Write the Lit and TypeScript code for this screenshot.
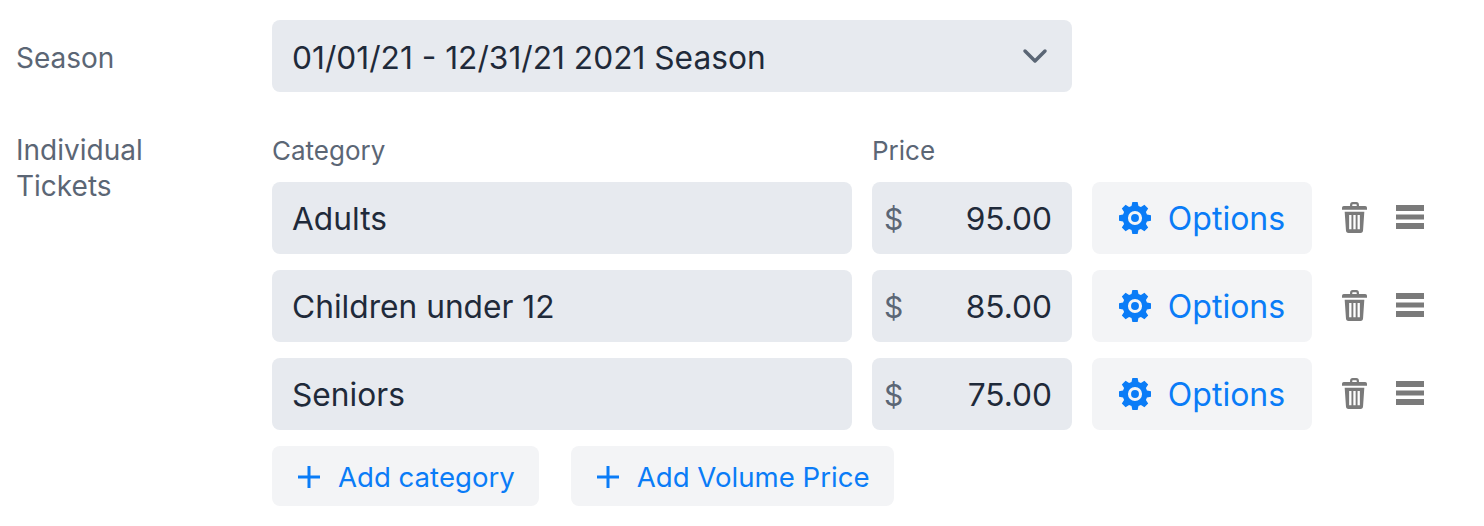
import { LitElement, html, css, svg } from "lit";
import { customElement } from "lit/decorators.js";

const gear = svg`<path fill-rule="evenodd" fill="#0a7cf7" d="M13.2-1h5.600l.9 4.300 2.600 1.100L26 2l4 4-2.400 3.700 1.100 2.600 4.300.9v5.600l-4.300.9-1.100 2.600L30 26l-4 4-3.700-2.400-2.600 1.100-.9 4.300h-5.600l-.9-4.300-2.600-1.100L6 30l-4-4 2.400-3.700-1.100-2.600-4.300-.9v-5.600l4.300-.9 1.100-2.600L2 6l4-4 3.700 2.400 2.600-1.100zM16 8.500a7.500 7.500 0 1 0 0 15 7.500 7.500 0 0 0 0-15z"/><circle cx="16" cy="16" r="4.200" fill="#0a7cf7"/>`;

const rows = [
  { name: "Adults", price: "95.00" },
  { name: "Children under 12", price: "85.00" },
  { name: "Seniors", price: "75.00" },
];

@customElement("app-root")
export class AppRoot extends LitElement {
  static styles = css`
    :host {
      display: block;
      width: 1484px;
      height: 526px;
      background: #fff;
      font-family: Inter, "Liberation Sans", sans-serif;
      color: #1f2a3a;
      overflow: hidden;
    }
    .page {
      display: grid;
      grid-template-columns: 256px 1fr;
      row-gap: 40px;
      padding: 20px 0 0 16px;
    }
    .label {
      font-size: 28px;
      line-height: 36px;
      color: #5b6675;
    }
    .season-label {
      align-self: center;
      padding-top: 4px;
    }
    .ticket-label {
      width: 180px;
    }
    .select {
      width: 800px;
      height: 72px;
      box-sizing: border-box;
      padding: 0 20px;
      display: flex;
      align-items: center;
      justify-content: space-between;
      background: #e7eaef;
      border-radius: 8px;
      font-size: 31.7px;
    }
    .select-text {
      padding-top: 2px;
    }
    .chev {
      width: 26px;
      height: 16px;
      margin: 0 4px 1px 0;
      display: block;
    }
    .grid {
      display: grid;
      grid-template-columns: 580px 200px 220px 1fr;
      column-gap: 20px;
      row-gap: 16px;
      align-items: center;
    }
    .head {
      height: 34px;
      box-sizing: border-box;
      padding-top: 4px;
      font-size: 26px;
      line-height: 30px;
      color: #5b6675;
    }
    .field {
      height: 72px;
      box-sizing: border-box;
      background: #e7eaef;
      border-radius: 8px;
      display: flex;
      align-items: center;
      padding: 1px 20px 0;
      font-size: 31.7px;
    }
    .price {
      justify-content: space-between;
      padding: 1px 20px 0 12px;
    }
    .dollar {
      color: #5b6675;
      font-size: 30px;
    }
    .options {
      height: 72px;
      box-sizing: border-box;
      background: #f3f4f6;
      border: none;
      border-radius: 8px;
      display: flex;
      align-items: center;
      justify-content: center;
      gap: 17px;
      padding: 1px 0 0;
      color: #0a7cf7;
      font: inherit;
      font-size: 32px;
    }
    .gear {
      width: 32px;
      height: 32px;
      display: block;
      margin-top: -1px;
    }
    .icons {
      display: flex;
      align-items: center;
      gap: 29px;
      padding: 0 0 2px 10px;
    }
    .trash {
      width: 25px;
      height: 31px;
      display: block;
      flex: none;
    }
    .bars {
      width: 28px;
      height: 24px;
      display: block;
      flex: none;
    }
    .adds {
      grid-column: 1 / -1;
      display: flex;
      gap: 32px;
    }
    .add {
      height: 60px;
      box-sizing: border-box;
      padding: 1px 24px 0 26px;
      background: #f3f4f6;
      border: none;
      border-radius: 8px;
      display: flex;
      align-items: center;
      gap: 18px;
      color: #0a7cf7;
      font: inherit;
      font-size: 27.6px;
    }
    .plus {
      width: 22px;
      height: 22px;
      display: block;
    }
  `;

  render() {
    return html`
      <div class="page">
        <div class="label season-label">Season</div>
        <div class="select">
          <span class="select-text">01/01/21 - 12/31/21 2021 Season</span>
          <svg class="chev" viewBox="0 0 26 16" fill="none" stroke="#5b6675" stroke-width="3.500" stroke-linecap="round" stroke-linejoin="round">
            <path d="M3 3l10 10L23 3" />
          </svg>
        </div>
        <div class="label ticket-label">Individual Tickets</div>
        <div class="grid">
          <div class="head">Category</div>
          <div class="head">Price</div>
          <div></div>
          <div></div>
          ${rows.map(
            (r) => html`
              <div class="field">${r.name}</div>
              <div class="field price"><span class="dollar">$</span><span>${r.price}</span></div>
              <button class="options">
                <svg class="gear" viewBox="-1 -1 34 34">${gear}</svg>
                Options
              </button>
              <div class="icons">
                <svg class="trash" viewBox="0 0 28 32" preserveAspectRatio="none" fill="#7a7a7a">
                  <path fill-rule="evenodd" d="M9 4V3a3 3 0 0 1 3-3h4a3 3 0 0 1 3 3v1h7a2 2 0 0 1 2 2v2H0V6a2 2 0 0 1 2-2zm2.500 0h5V3a.6.6 0 0 0-.6-.6h-3.800a.6.6 0 0 0-.6.6z" />
                  <path fill-rule="evenodd" d="M3 10h22l-1.400 19a3 3 0 0 1-3 3H7.400a3 3 0 0 1-3-3zm5 3.500V28h2.600V13.500zm4.700 0V28h2.600V13.500zm4.700 0V28H20V13.500z" />
                </svg>
                <svg class="bars" viewBox="0 0 28 24" fill="#7a7a7a">
                  <rect y="0" width="28" height="6" />
                  <rect y="9.500" width="28" height="5" />
                  <rect y="18" width="28" height="6" />
                </svg>
              </div>
            `
          )}
          <div class="adds">
            <button class="add">
              <svg class="plus" viewBox="0 0 22 22" fill="#0a7cf7"><path d="M9.500 0h3v9.500H22v3h-9.500V22h-3v-9.500H0v-3h9.500z" /></svg>
              Add category
            </button>
            <button class="add">
              <svg class="plus" viewBox="0 0 22 22" fill="#0a7cf7"><path d="M9.500 0h3v9.500H22v3h-9.500V22h-3v-9.500H0v-3h9.500z" /></svg>
              Add Volume Price
            </button>
          </div>
        </div>
      </div>
    `;
  }
}
